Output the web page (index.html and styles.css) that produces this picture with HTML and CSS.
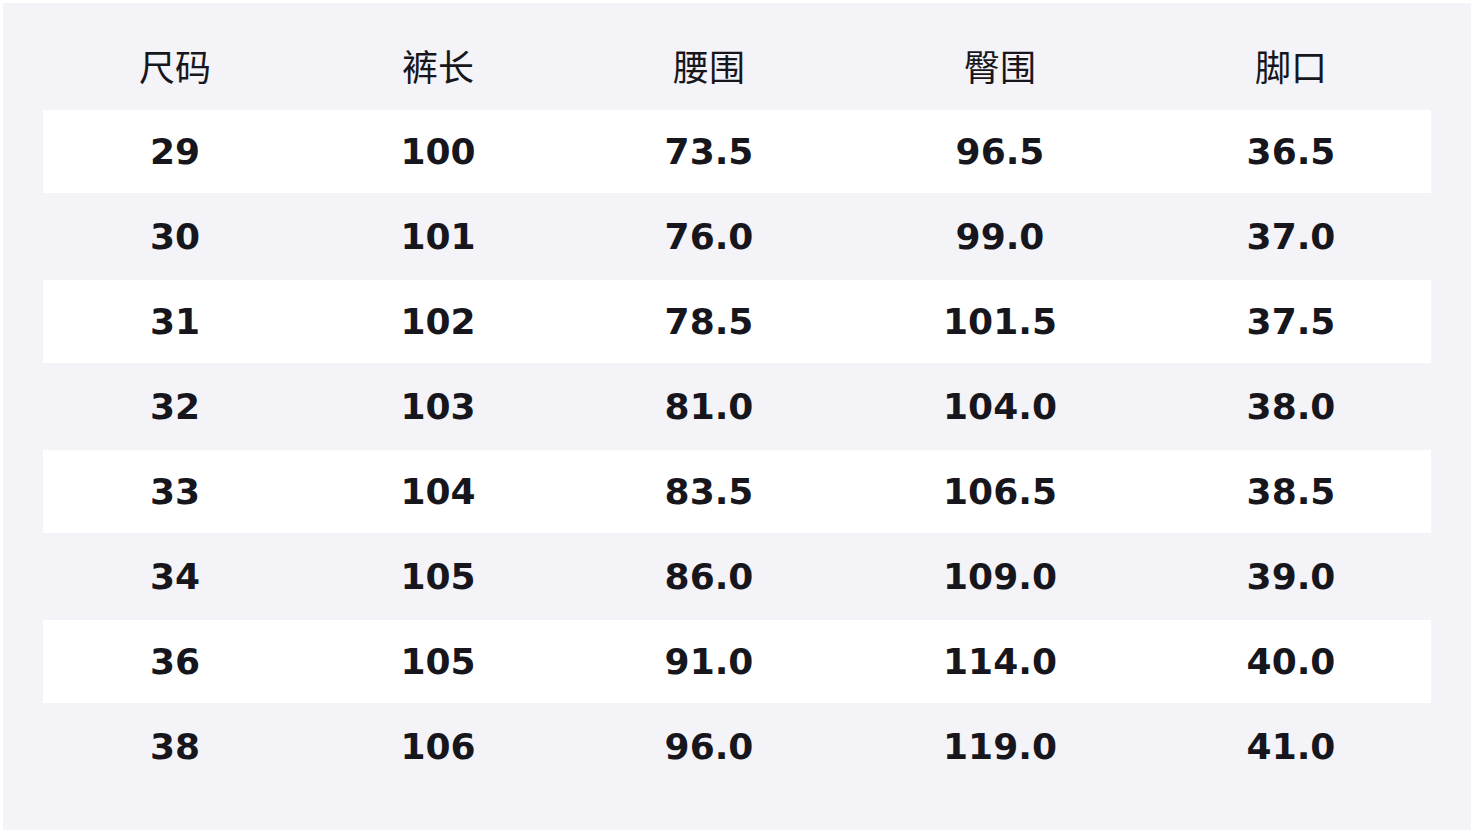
FILE: index.html
```html
<!DOCTYPE html>
<html lang="zh">
<head>
<meta charset="utf-8">
<title>尺码表</title>
<link rel="stylesheet" href="styles.css">
</head>
<body>
<div class="panel">
  <div class="table">
    <div class="row head">
      <div class="cell">尺码</div><div class="cell">裤长</div><div class="cell">腰围</div><div class="cell">臀围</div><div class="cell">脚口</div>
    </div>
    <div class="row white"><div class="cell">29</div><div class="cell">100</div><div class="cell">73.5</div><div class="cell">96.5</div><div class="cell">36.5</div></div>
    <div class="row"><div class="cell">30</div><div class="cell">101</div><div class="cell">76.0</div><div class="cell">99.0</div><div class="cell">37.0</div></div>
    <div class="row white"><div class="cell">31</div><div class="cell">102</div><div class="cell">78.5</div><div class="cell">101.5</div><div class="cell">37.5</div></div>
    <div class="row"><div class="cell">32</div><div class="cell">103</div><div class="cell">81.0</div><div class="cell">104.0</div><div class="cell">38.0</div></div>
    <div class="row white"><div class="cell">33</div><div class="cell">104</div><div class="cell">83.5</div><div class="cell">106.5</div><div class="cell">38.5</div></div>
    <div class="row"><div class="cell">34</div><div class="cell">105</div><div class="cell">86.0</div><div class="cell">109.0</div><div class="cell">39.0</div></div>
    <div class="row white"><div class="cell">36</div><div class="cell">105</div><div class="cell">91.0</div><div class="cell">114.0</div><div class="cell">40.0</div></div>
    <div class="row"><div class="cell">38</div><div class="cell">106</div><div class="cell">96.0</div><div class="cell">119.0</div><div class="cell">41.0</div></div>
  </div>
</div>
</body>
</html>
```
FILE: styles.css
```css
html, body {
  margin: 0;
  padding: 0;
  background: #ffffff;
}
body {
  padding: 3px;
}
.panel {
  width: 1468px;
  height: 827px;
  box-sizing: border-box;
  background: #f3f3f8;
  padding: 22px 40px 0 40px;
}
.table {
  display: flex;
  flex-direction: column;
  gap: 2px;
}
.row {
  display: grid;
  grid-template-columns: 264fr 262fr 280fr 302fr 280fr;
  height: 83px;
}
.row.white {
  background: #ffffff;
}
.cell {
  display: flex;
  align-items: center;
  justify-content: center;
  font-family: "DejaVu Sans", "Noto Sans CJK SC", sans-serif;
  font-weight: bold;
  font-size: 36px;
  color: #16161c;
}
.head .cell {
  font-family: "Noto Sans CJK SC", sans-serif;
  font-weight: normal;
  font-size: 36px;
  padding-bottom: 4px;
  color: #16161c;
}
```
